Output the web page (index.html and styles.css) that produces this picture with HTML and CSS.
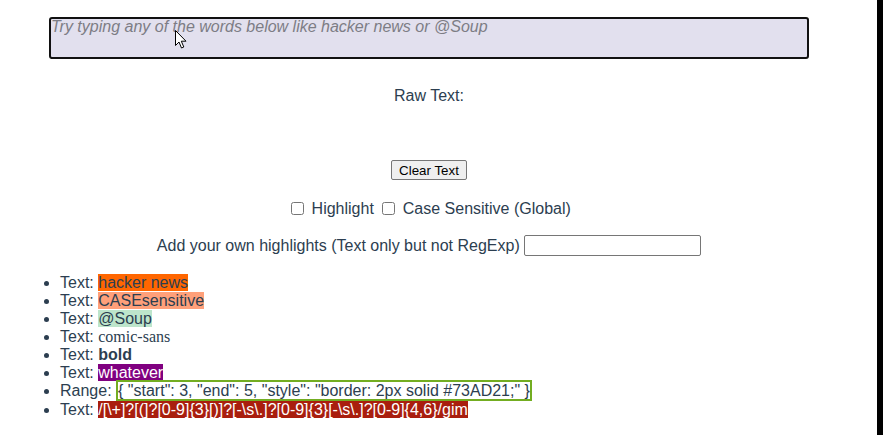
FILE: index.html
```html
<!DOCTYPE html>
<html lang="en">
  <head>
    <meta charset="UTF-8" />
    <meta name="viewport" content="width=device-width, initial-scale=1.0" />
    <title>Highlight Within Textarea</title>
    <link rel="stylesheet" href="styles.css">
  </head>
  <body>
    <div class="app">
      <textarea class="editor" placeholder="Try typing any of the words below like hacker news or @Soup"></textarea>

      <p class="raw-label">Raw Text:</p>
      <div class="raw-output"></div>

      <button class="clear-btn">Clear Text</button>

      <p class="options">
        <label><input type="checkbox" /> Highlight</label>
        <label><input type="checkbox" /> Case Sensitive (Global)</label>
      </p>

      <p class="custom">
        Add your own highlights (Text only but not RegExp)
        <input type="text" class="custom-input" />
      </p>

      <ul class="samples">
        <li>Text: <span class="hl-orange">hacker news</span></li>
        <li>Text: <span class="hl-salmon">CASEsensitive</span></li>
        <li>Text: <span class="hl-green">@Soup</span></li>
        <li>Text: <span class="hl-comic">comic-sans</span></li>
        <li>Text: <span class="hl-bold">bold</span></li>
        <li>Text: <span class="hl-purple">whatever</span></li>
        <li>Range: <span class="hl-range">{ "start": 3, "end": 5, "style": "border: 2px solid #73AD21;" }</span></li>
        <li class="last">Text: <span class="hl-red">/[\+]?[(]?[0-9]{3}[)]?[-\s\.]?[0-9]{3}[-\s\.]?[0-9]{4,6}/gim</span></li>
      </ul>
    </div>

    <svg class="cursor" width="12" height="19" viewBox="0 0 12 19">
      <path d="M0.5 0.5 L0.5 15.5 L4 12 L6.5 18 L8.8 17 L6.3 11.2 L11 11.2 Z" fill="#fff" stroke="#000" stroke-width="1" />
    </svg>
  </body>
</html>
```

FILE: styles.css
```css
html {
  background: #000;
}

body {
  margin: 0;
  width: 877px;
  min-height: 100vh;
  background: #fff;
  font-family: "Liberation Sans", Arial, sans-serif;
  font-size: 16px;
  color: #2c3e50;
}

.app {
  width: 858px;
  text-align: center;
  padding-top: 17px;
}

.editor {
  display: block;
  box-sizing: border-box;
  width: 760px;
  height: 42px;
  margin: 0 auto;
  padding: 0;
  border: 2px solid #111;
  border-radius: 3px;
  background: #e2e0ee;
  font-family: "Liberation Sans", Arial, sans-serif;
  font-size: 16px;
  line-height: 15px;
  resize: none;
}

.editor::placeholder {
  color: #7d7d85;
  font-style: italic;
}

.raw-label {
  margin: 28px 0 0;
  line-height: 18px;
}

.raw-output {
  height: 55px;
}

.clear-btn {
  display: block;
  margin: 0 auto;
  height: 20px;
  padding: 0 7px;
  font-family: "Liberation Sans", Arial, sans-serif;
  font-size: 13.33px;
  color: #000;
  background: #efefef;
  border: 1px solid #767676;
  border-radius: 2px;
}

.options {
  margin: 20px 0 0;
  line-height: 18px;
}

.options input {
  margin: 0 3px 0 4px;
  vertical-align: -1px;
}

.custom {
  margin: 17px 0 0;
  line-height: 22px;
}

.custom-input {
  box-sizing: border-box;
  width: 177px;
  height: 21px;
  border: 1px solid #767676;
  border-radius: 2px;
  vertical-align: top;
}

.samples {
  margin: 17px 0 0;
  padding-left: 60px;
  text-align: left;
  line-height: 18px;
}

.samples .last {
  margin-top: 1px;
}

.hl-orange {
  background: #ff6600;
}

.hl-salmon {
  background: #ffa07a;
}

.hl-green {
  background: #bde5cb;
}

.hl-comic {
  font-family: "Liberation Serif", serif;
}

.hl-bold {
  font-weight: bold;
}

.hl-purple {
  background: #800080;
  color: #fff;
}

.hl-range {
  border: 2px solid #73ad21;
}

.hl-red {
  background: #a91e0e;
  color: #fff;
}

.cursor {
  position: absolute;
  left: 175px;
  top: 30px;
}
```
